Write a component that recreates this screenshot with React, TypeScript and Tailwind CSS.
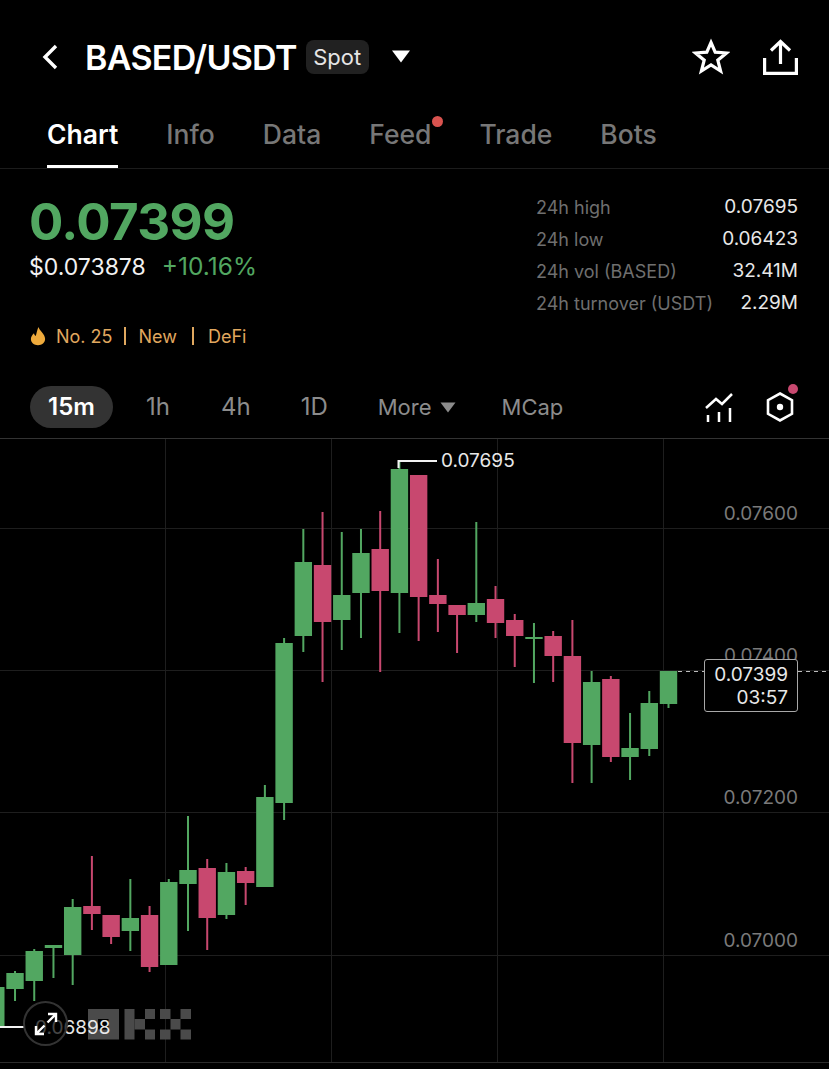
import { ReactNode } from 'react';

const GREEN = '#52a761';
const RED = '#c8486f';

// [high, body top, body bottom, low, up?]
const candles: [number, number, number, number, boolean][] = [
  [987, 987, 1026, 1026, true],
  [971, 973, 989, 1001, true],
  [949, 951, 981, 1001, true],
  [945, 945, 948, 978, true],
  [899, 907, 955, 985, true],
  [856, 906, 914, 930, false],
  [915, 915, 937, 944, false],
  [879, 918, 931, 951, true],
  [906, 915, 967, 972, false],
  [879, 882, 965, 965, true],
  [816, 870, 884, 931, true],
  [859, 868, 918, 950, false],
  [863, 872, 915, 919, true],
  [867, 871, 883, 905, false],
  [785, 797, 887, 887, true],
  [638, 643, 803, 820, true],
  [529, 562, 636, 652, true],
  [512, 565, 622, 682, false],
  [532, 595, 620, 650, true],
  [529, 553, 593, 638, true],
  [511, 549, 591, 672, false],
  [461, 469, 593, 633, true],
  [475, 475, 597, 641, false],
  [559, 595, 604, 632, false],
  [605, 605, 615, 653, false],
  [522, 603, 615, 622, true],
  [586, 599, 623, 638, false],
  [614, 620, 636, 667, false],
  [623, 637, 639, 683, true],
  [631, 636, 656, 682, false],
  [620, 656, 743, 783, false],
  [671, 682, 745, 783, true],
  [676, 679, 757, 762, false],
  [713, 748, 757, 780, true],
  [691, 703, 749, 756, true],
  [671, 671, 704, 708, true],
];

// chart body starts under the 1px divider at y=438
const TOP = 439;

function Tab({ label, active, dot }: { label: string; active?: boolean; dot?: boolean }) {
  return (
    <div className={`relative h-full flex items-start ${active ? 'text-white font-semibold border-b-[3px] border-white' : 'text-[#777777] font-medium'}`}>
      {label}
      {dot && <span className="absolute right-[-12px] top-[2px] w-[11px] h-[11px] rounded-full bg-[#d9534f]" />}
    </div>
  );
}

function StatRow({ label, value }: { label: string; value: string }) {
  return (
    <div className="flex justify-between h-[32px] items-center">
      <span className="text-[#6f6f6f]">{label}</span>
      <span className="text-[19px] text-[#e8e8e8]">{value}</span>
    </div>
  );
}

function ChartDrawing() {
  return (
    <svg width={829} height={630} viewBox={`0 ${TOP} 829 630`} className="block">
      {[528, 670, 812, 955].map((y) => (
        <line key={y} x1={0} x2={829} y1={y + 0.5} y2={y + 0.5} stroke="#1e1e1e" />
      ))}
      {[165, 331, 497, 663].map((x) => (
        <line key={x} x1={x + 0.5} x2={x + 0.5} y1={TOP} y2={1062} stroke="#1e1e1e" />
      ))}
      <line x1={0} x2={829} y1={1062.5} y2={1062.5} stroke="#2c2c2c" />
      {candles.map(([high, top, bottom, low, up], i) => {
        const x = -4.2 + 19.22 * i;
        const color = up ? GREEN : RED;
        return (
          <g key={i} fill={color}>
            <rect x={x - 1} y={high} width={2} height={low - high} />
            <rect x={x - 8.7} y={top} width={17.4} height={bottom - top} />
          </g>
        );
      })}
      <path d="M398.5 468V461H437" fill="none" stroke="#f2f2f2" strokeWidth={2} />
      <path d="M0 1027H24" stroke="#f2f2f2" strokeWidth={2} />
      <line x1={678} x2={829} y1={671.5} y2={671.5} stroke="#bdbdbd" strokeDasharray="4 4" />
      {/* OKX mark */}
      <g fill="#4a4a4a">
        <rect x={88} y={1009} width={31} height={30.5} />
        <rect x={124.5} y={1009} width={10} height={30.5} />
        <rect x={134.5} y={1019} width={10.5} height={10.5} />
        <rect x={145} y={1009} width={10} height={10} />
        <rect x={145} y={1029.5} width={10} height={10} />
        <rect x={160} y={1009} width={10.5} height={10} />
        <rect x={180.5} y={1009} width={10.5} height={10} />
        <rect x={170.5} y={1019} width={10} height={10.5} />
        <rect x={160} y={1029.5} width={10.5} height={10} />
        <rect x={180.5} y={1029.5} width={10.5} height={10} />
      </g>
      <rect x={98} y={1019} width={10.5} height={10.5} fill="#000000" />
    </svg>
  );
}

function AxisLabel({ className, children }: { className: string; children: ReactNode }) {
  return <span className={`absolute leading-none text-[19px] ${className}`}>{children}</span>;
}

export default function App() {
  return (
    <div className="w-[829px] h-[1069px] bg-black overflow-hidden text-white font-['Inter',sans-serif]">
      <header className="h-[114px] pl-[41px] pr-[31px] flex items-center">
        <svg width={18} height={26} viewBox="0 0 18 26" fill="none" stroke="#ffffff" strokeWidth={3.4}>
          <path d="M15 2 4 13 15 24" />
        </svg>
        <span className="ml-[26px] text-[34px] font-semibold tracking-[-0.7px]">BASED/USDT</span>
        <span className="ml-[9px] h-[34px] w-[63px] flex items-center justify-center rounded-[8px] bg-[#212121] text-[22px] text-[#e6e6e6]">Spot</span>
        <svg width={18} height={13} viewBox="0 0 18 13" className="ml-[23px] mt-[-1px]">
          <path d="M0 .5h18L9 12.5z" fill="#ffffff" />
        </svg>
        <div className="ml-auto flex items-center gap-[33px] mt-[-1px]">
          <svg width={38} height={37} viewBox="0 0 38 37" fill="none" stroke="#ffffff" strokeWidth={3.2}>
            <path d="M19 4.5 23.2 14.2 34.5 15 25.8 22.2 28.6 33 19 27 9.4 33 12.2 22.2 3.5 15 14.8 14.2Z" />
          </svg>
          <svg width={35} height={36} viewBox="0 0 35 36" fill="none" stroke="#ffffff" strokeWidth={3.2}>
            <path d="M17.5 25V3M8 11.5 17.5 2.5 27 11.5M1.6 19v15.4h31.8V19" />
          </svg>
        </div>
      </header>

      <nav className="h-[55px] pl-[47px] flex gap-[48px] text-[26.5px] leading-[40px] border-b border-[#1c1c1c]">
        <Tab label="Chart" active />
        <Tab label="Info" />
        <Tab label="Data" />
        <Tab label="Feed" dot />
        <Tab label="Trade" />
        <Tab label="Bots" />
      </nav>

      <section className="h-[217px] pl-[29px] pr-[31px] flex justify-between">
        <div>
          <div className="mt-[23px] h-[60px] flex items-center text-[51px] font-bold tracking-[-0.6px] text-[#52a761]">0.07399</div>
          <div className="mt-[-4px] flex items-baseline gap-[16px] text-[23px]">
            <span className="text-[#f2f2f2]">$0.073878</span>
            <span className="text-[24.5px] text-[#52a761]">+10.16%</span>
          </div>
          <div className="mt-[38px] flex items-center text-[18px] text-[#e0a85f]">
            <svg width={16} height={20} viewBox="0 0 18 22" className="ml-[1px] mr-[10px]">
              <path d="M9.5 1C10.5 5 17 9 17 14.5 17 18.5 13.5 21.5 9 21.5S1 18.5 1 14.5C1 11.5 3 9.5 4.5 8c.3 1.5 1 2.5 2 3C7.5 8 8 4 9.5 1Z" fill="#eeaa3c" />
            </svg>
            <span>No. 25</span>
            <span className="ml-[11px] mr-[13px] w-[2px] h-[18px] bg-[#e0a85f]" />
            <span>New</span>
            <span className="ml-[15px] mr-[14px] w-[2px] h-[18px] bg-[#e0a85f]" />
            <span>DeFi</span>
          </div>
        </div>
        <div className="w-[262px] mt-[22px] text-[18px]">
          <StatRow label="24h high" value="0.07695" />
          <StatRow label="24h low" value="0.06423" />
          <StatRow label="24h vol (BASED)" value="32.41M" />
          <StatRow label="24h turnover (USDT)" value="2.29M" />
        </div>
      </section>

      <div className="h-[52px] pl-[30px] pr-[35px] pb-[10px] flex items-center text-[22px] text-[#8c8c8c]">
        <div className="w-[83px] h-[42px] flex items-center justify-center rounded-full bg-[#333333] text-[24px] text-white font-semibold">15m</div>
        <span className="ml-[33px] text-[24px]">1h</span>
        <span className="ml-[51px] text-[24px]">4h</span>
        <span className="ml-[50px] text-[24px]">1D</span>
        <span className="ml-[50px]">More</span>
        <svg width={16} height={11} viewBox="0 0 16 11" className="ml-[8px]">
          <path d="M.5.5h15L8 10.5z" fill="#8c8c8c" />
        </svg>
        <span className="ml-[46px]">MCap</span>
        <div className="ml-auto flex items-center gap-[33px]">
          <svg width={28} height={29} viewBox="0 0 28 29" fill="none" stroke="#ffffff" strokeWidth={2.5}>
            <path d="M1 15 11 6 17 11 27 1M3 22v7M14 19v10M25 15v14" />
          </svg>
          <div className="relative">
            <svg width={28} height={30} viewBox="0 0 28 30" fill="none" stroke="#ffffff" strokeWidth={2.6}>
              <path d="M14 1.5 26 8.2V21.8L14 28.5 2 21.8V8.2Z" />
              <circle cx={14} cy={15} r={3.2} fill="#ffffff" stroke="none" />
            </svg>
            <span className="absolute right-[-4px] top-[-8px] w-[10px] h-[10px] rounded-full bg-[#c8486f]" />
          </div>
        </div>
      </div>

      <div className="relative h-[631px] border-t border-[#333333]">
        <ChartDrawing />
        <AxisLabel className="left-[441px] top-[12px] text-[#e8e8e8]">0.07695</AxisLabel>
        <AxisLabel className="right-[31px] top-[65px] text-[#7a7a7a]">0.07600</AxisLabel>
        <AxisLabel className="right-[31px] top-[207px] text-[#7a7a7a]">0.07400</AxisLabel>
        <AxisLabel className="right-[31px] top-[349px] text-[#7a7a7a]">0.07200</AxisLabel>
        <AxisLabel className="right-[31px] top-[492px] text-[#7a7a7a]">0.07000</AxisLabel>
        <AxisLabel className="left-[35px] top-[579px] text-[#e8e8e8]">0.06898</AxisLabel>
        <div className="absolute left-[704px] top-[220px] w-[94px] h-[53px] pr-[9px] rounded-[3px] border border-[#a8a8a8] bg-black flex flex-col items-end justify-center text-[19px] leading-[23px] text-[#e8e8e8]">
          <span>0.07399</span>
          <span>03:57</span>
        </div>
        <div className="absolute left-[23px] top-[562px] w-[45px] h-[45px] rounded-full border-2 border-[#333333] bg-black/70 flex items-center justify-center">
          <svg width={24} height={24} viewBox="0 0 24 24" fill="none" stroke="#ffffff" strokeWidth={2.4}>
            <path d="M14 2h8v8M22 2 13.5 10.5M10 22H2v-8M2 22l8.5-8.5" />
          </svg>
        </div>
      </div>
    </div>
  );
}
